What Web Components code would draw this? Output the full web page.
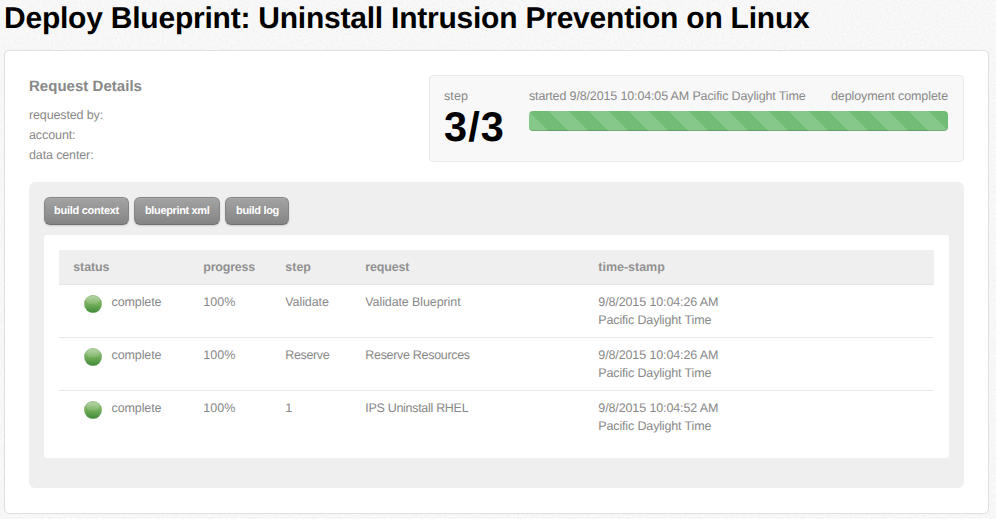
<!DOCTYPE html>
<html lang="en">
<head>
<meta charset="utf-8">
<title>Deploy Blueprint</title>
<style>
html,body{margin:0;height:519px;overflow:hidden;background:#f7f7f7}
body{font:12.5px/18px "Liberation Sans",Arial,sans-serif;color:#888;text-rendering:geometricPrecision}
</style>
</head>
<body>
<deploy-page></deploy-page>
<script>
const define = (name, html, ready) => customElements.define(name, class extends HTMLElement {
  connectedCallback() {
    if (this.shadowRoot) return;
    this.attachShadow({mode: 'open'}).innerHTML = html;
    if (ready) ready(this);
  }
});

// Text line tracked so that its advance width equals the "w" attribute.
define('tracked-text', '<style>:host{display:block;white-space:nowrap}span{display:inline-block}</style><span></span>', el => {
  const s = el.shadowRoot.querySelector('span');
  s.textContent = el.getAttribute('t');
  const w = parseFloat(el.getAttribute('w'));
  if (w) s.style.letterSpacing = ((w - s.getBoundingClientRect().width) / s.textContent.length).toFixed(3) + 'px';
});

define('paper-grain', `<style>:host{display:block;position:absolute;inset:0;z-index:-1}svg{display:block}</style>
<svg width="996" height="519"><filter id="g" x="0" y="0" width="100%" height="100%" color-interpolation-filters="sRGB">
<feTurbulence type="fractalNoise" baseFrequency=".45" numOctaves="2" seed="4"/>
<feColorMatrix values=".05 0 0 0 .943  .05 0 0 0 .943  .05 0 0 0 .943  0 0 0 0 1"/></filter>
<rect width="996" height="519" filter="url(#g)"/></svg>`);

define('tool-button', `<style>:host{display:block;box-sizing:border-box;height:28px;border:1px solid #858585;border-bottom-color:#707070;border-radius:6px;background:linear-gradient(#a3a3a3,#858585);box-shadow:inset 0 1px 0 #aaa,0 1px 2px rgba(0,0,0,.15);color:#fff;font-weight:bold;font-size:11px;line-height:27px;padding-left:9px}</style><slot></slot>`);

define('status-orb', `<style>:host{display:block;width:18px;height:18px}svg{display:block}</style>
<svg width="18" height="18"><defs><linearGradient id="a" x2="0" y2="1"><stop offset="0" stop-color="#8fbd77"/><stop offset=".5" stop-color="#74af5b"/><stop offset="1" stop-color="#408a38"/></linearGradient>
<linearGradient id="b" x2="0" y2="1"><stop offset="0" stop-color="#fff" stop-opacity=".35"/><stop offset="1" stop-color="#fff" stop-opacity=".08"/></linearGradient></defs>
<circle cx="9" cy="9" r="8.7" fill="url(#a)" stroke="#5f9950" stroke-opacity=".5" stroke-width=".6"/><ellipse cx="9" cy="5.2" rx="6.9" ry="4.3" fill="url(#b)"/></svg>`);

define('request-details', `<style>:host{display:block;padding-top:2px}.h{font-weight:bold;font-size:15px;line-height:20px;margin-bottom:8px}.l{line-height:20px}</style>
<tracked-text class="h" t="Request Details" w="113"></tracked-text>
<tracked-text class="l" t="requested by:" w="74"></tracked-text>
<tracked-text class="l" t="account:" w="46.5"></tracked-text>
<tracked-text class="l" t="data center:" w="64.5"></tracked-text>`);

define('progress-bar', `<style>:host{display:block;height:20px;border-radius:4px;background:linear-gradient(45deg,rgba(255,255,255,.15) 25%,transparent 25%,transparent 50%,rgba(255,255,255,.15) 50%,rgba(255,255,255,.15) 75%,transparent 75%) 20px 0/40px 40px #71bd75;box-shadow:inset 0 -1px 0 rgba(0,0,0,.15)}</style>`);

define('step-summary', `<style>:host{display:flex;box-sizing:border-box;width:535px;height:87px;border:1px solid #eaeaea;border-radius:4px;background:#f8f8f8;padding:11px 15px 0 14px}
.s{width:85px}.n{font-size:41.5px;line-height:42px;font-weight:bold;color:#000;margin-top:1px}.r{flex:1}.t{display:flex;justify-content:space-between;margin-bottom:6px}</style>
<div class="s"><tracked-text t="step" w="24"></tracked-text><tracked-text class="n" t="3/3" w="61"></tracked-text></div>
<div class="r"><div class="t"><tracked-text t="started 9/8/2015 10:04:05 AM Pacific Daylight Time" w="276.5"></tracked-text><tracked-text t="deployment complete" w="117"></tracked-text></div><progress-bar></progress-bar></div>`);

define('step-row', `<style>:host{display:grid;grid-template-columns:130px 82px 80px 233px 1fr;box-sizing:border-box;height:53px;padding:8px 0 0 14.3px;border-bottom:1px solid #e9e9e9}
:host([last]){border-bottom-color:transparent}.st{display:flex;padding-left:10.7px;gap:9.5px}status-orb{margin-top:2px}</style>
<div class="st"><status-orb></status-orb><tracked-text t="complete" w="50"></tracked-text></div><tracked-text t="100%" w="32"></tracked-text><div id="s"></div><div id="r"></div><div id="d"></div>`, el => {
  const put = (id, t, w) => {
    const n = document.createElement('tracked-text');
    n.setAttribute('t', t); n.setAttribute('w', w);
    el.shadowRoot.getElementById(id).append(n);
  };
  put('s', el.getAttribute('step'), el.getAttribute('sw'));
  put('r', el.getAttribute('request'), el.getAttribute('rw'));
  put('d', el.getAttribute('time'), 120);
  put('d', 'Pacific Daylight Time', 113);
});

define('step-table', `<style>:host{display:block;box-sizing:border-box;height:223px;padding:15px;background:#fff;border-radius:3px}
.h{display:grid;grid-template-columns:130px 82px 80px 233px 1fr;height:34px;padding-left:14.3px;background:#efefef;border-bottom:1px solid #e6e6e6;font-weight:bold;line-height:34px;color:#919191}</style>
<div class="h"><tracked-text t="status" w="36"></tracked-text><tracked-text t="progress" w="51.7"></tracked-text><tracked-text t="step" w="25.7"></tracked-text><tracked-text t="request" w="44"></tracked-text><tracked-text t="time-stamp" w="66.5"></tracked-text></div>
<step-row step="Validate" sw="43.5" request="Validate Blueprint" rw="95.2" time="9/8/2015 10:04:26 AM"></step-row>
<step-row step="Reserve" sw="44" request="Reserve Resources" rw="104.5" time="9/8/2015 10:04:26 AM"></step-row>
<step-row last step="1" sw="6.67" request="IPS Uninstall RHEL" rw="103" time="9/8/2015 10:04:52 AM"></step-row>`);

define('deploy-page', `<style>:host{display:block;position:relative;z-index:0;height:519px;overflow:hidden}
h1{margin:0;padding:0 0 0 4px;height:50px;font-size:30px;line-height:37px;color:#000;font-weight:bold}
.panel{box-sizing:border-box;width:985px;height:464px;margin-left:4px;border:1px solid #dfdfdf;border-radius:5px;background:#fff;padding:24px}
.top{display:flex;justify-content:space-between;height:107px}
.box{box-sizing:border-box;height:306px;border-radius:6px;background:#efefef;padding:15px}
.b{display:flex;gap:5px;margin-bottom:10px}</style>
<paper-grain></paper-grain>
<h1><tracked-text t="Deploy Blueprint: Uninstall Intrusion Prevention on Linux" w="805.5"></tracked-text></h1>
<div class="panel"><div class="top"><request-details></request-details><step-summary></step-summary></div>
<div class="box"><div class="b"><tool-button style="width:85px"><tracked-text t="build context" w="65"></tracked-text></tool-button><tool-button style="width:86px;padding-left:10px"><tracked-text t="blueprint xml" w="64.5"></tracked-text></tool-button><tool-button style="width:64px;padding-left:10px"><tracked-text t="build log" w="43"></tracked-text></tool-button></div>
<step-table></step-table></div></div>`);
</script>
</body>
</html>
